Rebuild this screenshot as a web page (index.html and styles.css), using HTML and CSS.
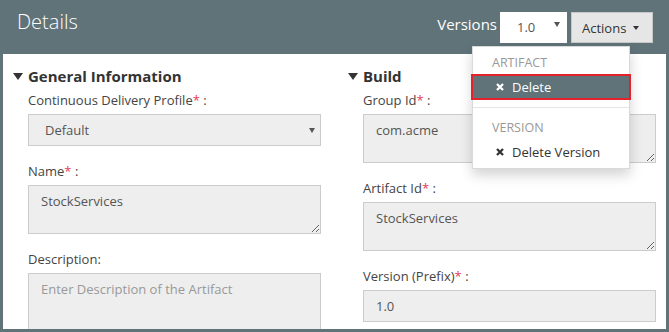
FILE: index.html
```html
<!DOCTYPE html>
<html lang="en">
<head>
  <meta charset="UTF-8">
  <meta name="viewport" content="width=device-width, initial-scale=1.0">
  <title>Details</title>
  <link rel="stylesheet" href="styles.css">
</head>
<body>
  <header class="topbar">
    <h1 class="title">Details</h1>
    <div class="toolbar">
      <span class="toolbar-label">Versions</span>
      <div class="version-select"><span>1.0</span><span class="caret-sm"></span></div>
      <div class="actions">
        <button class="actions-btn">Actions <span class="caret"></span></button>
        <ul class="menu">
          <li class="menu-header">ARTIFACT</li>
          <li class="menu-item active">
            <svg class="icon-x" width="8" height="8" viewBox="0 0 8 8"><path d="M1 1L7 7M7 1L1 7" stroke="currentColor" stroke-width="2.3"/></svg>
            Delete
          </li>
          <li class="divider"></li>
          <li class="menu-header">VERSION</li>
          <li class="menu-item">
            <svg class="icon-x" width="8" height="8" viewBox="0 0 8 8"><path d="M1 1L7 7M7 1L1 7" stroke="currentColor" stroke-width="2.3"/></svg>
            Delete Version
          </li>
        </ul>
      </div>
    </div>
  </header>

  <main class="panel">
    <section class="col">
      <h2 class="section-title"><span class="tri"></span>General Information</h2>
      <div class="field">
        <label>Continuous Delivery Profile<span class="req">*</span> :</label>
        <div class="input select"><span>Default</span><span class="caret-sm"></span></div>
      </div>
      <div class="field">
        <label>Name<span class="req">*</span> :</label>
        <textarea class="input" readonly>StockServices</textarea>
      </div>
      <div class="field">
        <label>Description:</label>
        <textarea class="input tall" readonly placeholder="Enter Description of the Artifact"></textarea>
      </div>
    </section>

    <section class="col">
      <h2 class="section-title"><span class="tri"></span>Build</h2>
      <div class="field">
        <label>Group Id<span class="req">*</span> :</label>
        <textarea class="input" readonly>com.acme</textarea>
      </div>
      <div class="field">
        <label>Artifact Id<span class="req">*</span> :</label>
        <textarea class="input" readonly>StockServices</textarea>
      </div>
      <div class="field">
        <label>Version (Prefix)<span class="req">*</span> :</label>
        <input class="input" type="text" value="1.0" readonly>
      </div>
    </section>
  </main>
</body>
</html>
```

FILE: styles.css
```css
body, html {
  margin: 0;
  padding: 0;
  font-family: "Open Sans", "Liberation Sans", sans-serif;
  background-color: #5f7379;
  height: 332px;
  overflow: hidden;
}

.topbar {
  display: flex;
  align-items: flex-start;
  height: 54px;
  box-sizing: border-box;
  padding: 12px 16px 0 17px;
}

.title {
  flex: 1;
  margin: 0;
  font-size: 20px;
  font-weight: 300;
  line-height: 20px;
  color: #fff;
}

.toolbar {
  display: flex;
  align-items: flex-start;
}

.toolbar-label {
  font-size: 15px;
  line-height: 20px;
  color: #fff;
  margin: 2px 3px 0 0;
}

.version-select {
  display: flex;
  width: 67px;
  height: 31px;
  box-sizing: border-box;
  padding: 6px 7px 0 17px;
  margin-right: 4px;
  background-color: #fff;
  font-size: 13px;
  line-height: 18px;
  color: #555;
}

.version-select .caret-sm {
  margin: 4px 0 0 auto;
}

.caret-sm {
  width: 0;
  height: 0;
  border-left: 3px solid transparent;
  border-right: 3px solid transparent;
  border-top: 5px solid #555;
}

.actions {
  position: relative;
}

.actions-btn {
  display: flex;
  align-items: center;
  gap: 7px;
  width: 82px;
  height: 31px;
  box-sizing: border-box;
  padding: 0 0 0 10px;
  background-color: #e6e6e6;
  border: 1px solid #c8c8c8;
  font-family: inherit;
  font-size: 13px;
  color: #333;
  cursor: pointer;
}

.caret {
  width: 0;
  height: 0;
  border-left: 3.5px solid transparent;
  border-right: 3.5px solid transparent;
  border-top: 4px solid #333;
}

.menu {
  position: absolute;
  top: 34px;
  right: 23px;
  z-index: 10;
  width: 158px;
  box-sizing: border-box;
  margin: 0;
  padding: 5px 0;
  list-style: none;
  background-color: #fff;
  border: 1px solid rgba(0, 0, 0, 0.15);
  box-shadow: 0 6px 12px rgba(0, 0, 0, 0.175);
}

.menu-header {
  padding: 2px 19px;
  margin-bottom: 2px;
  font-size: 12.5px;
  line-height: 18px;
  color: #999;
}

.menu-item {
  display: flex;
  align-items: center;
  gap: 8px;
  height: 22px;
  padding-left: 23px;
  font-size: 13px;
  color: #333;
  cursor: pointer;
}

.menu-item.active {
  background-color: #5f7379;
  color: #fff;
  outline: 2px solid #e5212b;
}

.divider {
  height: 1px;
  margin: 9px 0;
  background-color: #e5e5e5;
}

.panel {
  display: grid;
  grid-template-columns: 1fr 1fr;
  column-gap: 27px;
  align-items: start;
  height: 275px;
  box-sizing: border-box;
  margin: 0 3px;
  padding: 12px 10px 0;
  background-color: #fff;
  overflow: hidden;
}

.section-title {
  display: flex;
  align-items: center;
  gap: 5px;
  margin: 0 0 5px;
  font-size: 15px;
  font-weight: 700;
  line-height: 20px;
  color: #333;
}

.tri {
  width: 0;
  height: 0;
  border-left: 5.5px solid transparent;
  border-right: 5.5px solid transparent;
  border-top: 7px solid #333;
}

.field {
  margin: 0 0 16px 15px;
}

.field label {
  display: block;
  margin-bottom: 5px;
  font-size: 13px;
  line-height: 18px;
  color: #444;
}

.req {
  color: #e83a55;
}

.input {
  display: block;
  width: 100%;
  height: 32px;
  box-sizing: border-box;
  margin: 0;
  padding: 0 12px;
  background-color: #eee;
  border: 1px solid #ccc;
  border-radius: 0;
  font-family: inherit;
  font-size: 13px;
  line-height: 18px;
  color: #555;
  outline: none;
}

textarea.input {
  height: 49px;
  padding: 6px 12px;
  resize: vertical;
}

textarea.tall {
  height: 80px;
}

.input::placeholder {
  color: #999;
}

.select {
  display: flex;
  align-items: center;
  justify-content: space-between;
  padding: 0 5px 0 16px;
}
```
